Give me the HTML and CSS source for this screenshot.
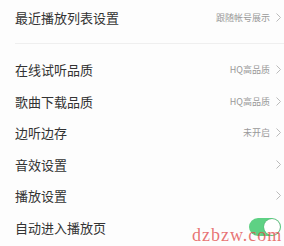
FILE: index.html
```
<!DOCTYPE html>
<html>
<head>
<meta charset="utf-8">
<link rel="stylesheet" href="styles.css">
</head>
<body>
<div class="page">
  <div class="row top">
    <span class="title">最近播放列表设置</span>
    <span class="right"><span class="sub">跟随帐号展示</span><svg class="chev" viewBox="0 0 5 9"><path d="M0.5 0.5 L4.5 4.5 L0.5 8.5" /></svg></span>
  </div>
  <div class="divider"></div>
  <div class="list">
    <div class="row">
      <span class="title">在线试听品质</span>
      <span class="right"><span class="sub">HQ高品质</span><svg class="chev" viewBox="0 0 5 9"><path d="M0.5 0.5 L4.5 4.5 L0.5 8.5" /></svg></span>
    </div>
    <div class="row">
      <span class="title">歌曲下载品质</span>
      <span class="right"><span class="sub">HQ高品质</span><svg class="chev" viewBox="0 0 5 9"><path d="M0.5 0.5 L4.5 4.5 L0.5 8.5" /></svg></span>
    </div>
    <div class="row">
      <span class="title">边听边存</span>
      <span class="right"><span class="sub">未开启</span><svg class="chev" viewBox="0 0 5 9"><path d="M0.5 0.5 L4.5 4.5 L0.5 8.5" /></svg></span>
    </div>
    <div class="row">
      <span class="title">音效设置</span>
      <span class="right"><svg class="chev" viewBox="0 0 5 9"><path d="M0.5 0.5 L4.5 4.5 L0.5 8.5" /></svg></span>
    </div>
    <div class="row">
      <span class="title">播放设置</span>
      <span class="right"><svg class="chev" viewBox="0 0 5 9"><path d="M0.5 0.5 L4.5 4.5 L0.5 8.5" /></svg></span>
    </div>
    <div class="row">
      <span class="title">自动进入播放页</span>
      <span class="right"><span class="toggle"><span class="knob"></span></span></span>
    </div>
  </div>
  <div class="watermark">dzbzw.com</div>
</div>
</body>
</html>
```
FILE: styles.css
```
html, body {
  margin: 0;
  padding: 0;
  background: #fdfdfd;
}
.page {
  position: relative;
  width: 284px;
  height: 246px;
  overflow: hidden;
  font-family: "Noto Sans CJK SC", "Noto Sans", sans-serif;
  color: #333;
}
.row {
  display: flex;
  align-items: center;
  justify-content: space-between;
  height: 31.5px;
  padding: 0 3px 0 15px;
}
.row.top {
  height: 35px;
}
.title {
  font-size: 13px;
  line-height: 1;
  color: #333;
}
.right {
  display: flex;
  align-items: center;
  gap: 6px;
}
.sub {
  font-size: 9px;
  color: #999;
  line-height: 1;
}
.chev {
  width: 5px;
  height: 9px;
  fill: none;
  stroke: #bbb;
  stroke-width: 1;
}
.divider {
  height: 1px;
  background: #efefef;
  margin: 8px 0 0 15px;
}
.list {
  padding-top: 10px;
}
.toggle {
  position: relative;
  width: 32px;
  height: 18px;
  border-radius: 9px;
  background: #5ed184;
  display: block;
}
.knob {
  position: absolute;
  right: 1px;
  top: 1px;
  width: 16px;
  height: 16px;
  border-radius: 50%;
  background: #fff;
  box-shadow: 0 0 1px rgba(0,0,0,0.4);
}
.watermark {
  position: absolute;
  left: 192px;
  top: 226px;
  font-family: "Liberation Serif", serif;
  font-size: 18px;
  line-height: 1;
  color: rgba(225, 70, 70, 0.75);
  letter-spacing: 1px;
}
```
